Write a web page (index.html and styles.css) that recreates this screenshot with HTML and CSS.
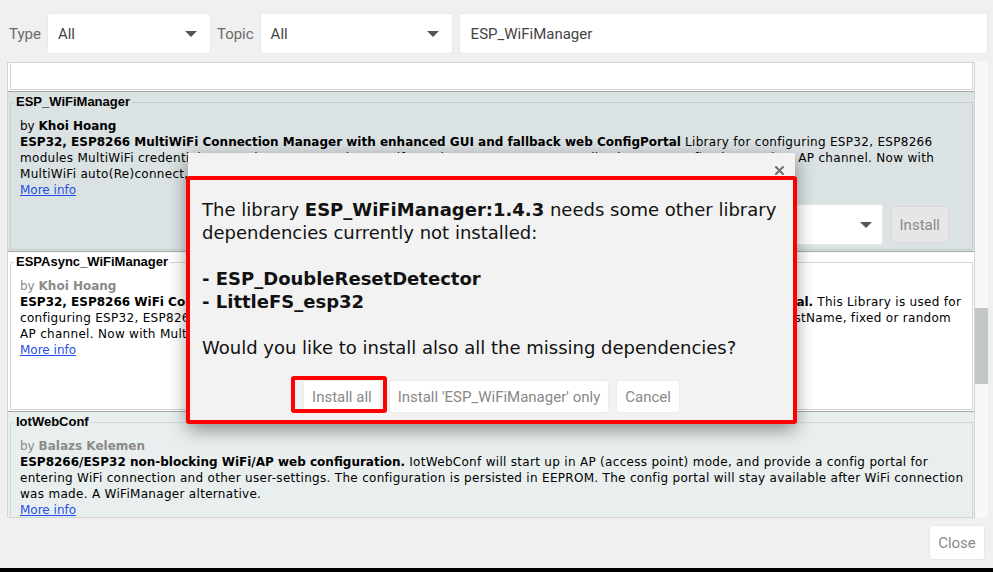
FILE: index.html
```html
<!DOCTYPE html>
<html>
<head>
<meta charset="utf-8">
<link rel="stylesheet" href="styles.css">
</head>
<body>
<div class="app">
  <div class="toolbar">
    <span class="lbl">Type</span>
    <div class="select sel-type"><span>All</span><i class="caret"></i></div>
    <span class="lbl">Topic</span>
    <div class="select sel-topic"><span>All</span><i class="caret"></i></div>
    <div class="search">ESP_WiFiManager</div>
  </div>

  <div class="listwrap">
    <div class="list">
      <div class="item stub"><div class="stubbox"></div></div>

      <div class="item selected">
        <fieldset>
          <legend>ESP_WiFiManager</legend>
          <div class="by">by <b>Khoi Hoang</b></div>
          <div class="desc"><b>ESP32, ESP8266 MultiWiFi Connection Manager with enhanced GUI and fallback web ConfigPortal</b> Library for configuring ESP32, ESP8266<br>modules MultiWiFi credentials at runtime. You can also specify static DNS servers, personalized HostName fixed or random AP channel. Now with<br>MultiWiFi auto(Re)connect, configurable Config Portal Title, custom DHCP hostname</div>
          <a class="more">More info</a>
          <div class="actions">
            <div class="vselect"><span>Select version</span><i class="caret"></i></div>
            <button class="install">Install</button>
          </div>
        </fieldset>
      </div>

      <div class="item">
        <fieldset>
          <legend>ESPAsync_WiFiManager</legend>
          <div class="by grey">by <b>Khoi Hoang</b></div>
          <div class="desc"><b>ESP32, ESP8266 WiFi Connection Manager using AsyncWebServer, with enhanced GUI and fallback web ConfigPortal.</b> This Library is used for<br>configuring ESP32, ESP8266 modules WiFi Credentials at runtime. You can also specify static DNS servers, personalized HostName, fixed or random<br>AP channel. Now with MultiWiFi auto(Re)connect, configurable Config Portal Title</div>
          <a class="more">More info</a>
        </fieldset>
      </div>

      <div class="item alt">
        <fieldset>
          <legend>IotWebConf</legend>
          <div class="by grey">by <b>Balazs Kelemen</b></div>
          <div class="desc"><b>ESP8266/ESP32 non-blocking WiFi/AP web configuration.</b> IotWebConf will start up in AP (access point) mode, and provide a config portal for<br>entering WiFi connection and other user-settings. The configuration is persisted in EEPROM. The config portal will stay available after WiFi connection<br>was made. A WiFiManager alternative.</div>
          <a class="more">More info</a>
        </fieldset>
      </div>
    </div>
    <div class="scrollbar"><div class="thumb"></div></div>
  </div>

  <div class="footer"><button class="close">Close</button></div>
  <div class="blackbar"></div>

  <div class="dialog">
    <div class="dlg-head">
      <svg class="xicon" width="9" height="9" viewBox="0 0 9 9"><path d="M1 1L8 8M8 1L1 8" stroke="#6e6e6e" stroke-width="2" stroke-linecap="round"/></svg>
    </div>
    <div class="dlg-body">
      <p>The library <b>ESP_WiFiManager:1.4.3</b> needs some other library<br>dependencies currently not installed:</p>
      <p><b>- ESP_DoubleResetDetector<br>- LittleFS_esp32</b></p>
      <p class="last">Would you like to install also all the missing dependencies?</p>
      <div class="dlg-btns">
        <button class="btn hl">Install all<span class="mark"></span></button>
        <button class="btn">Install 'ESP_WiFiManager' only</button>
        <button class="btn">Cancel</button>
      </div>
    </div>
  </div>
</div>
</body>
</html>
```

FILE: styles.css
```css
html, body {
  margin: 0;
  padding: 0;
}
body {
  width: 993px;
  height: 572px;
  overflow: hidden;
  background: #f0f0f0;
  font-family: Roboto, "Liberation Sans", sans-serif;
}
.app {
  position: relative;
  height: 572px;
  display: flex;
  flex-direction: column;
}

/* toolbar */
.toolbar {
  display: flex;
  align-items: center;
  gap: 6px;
  padding: 13px 5px 0 9px;
  height: 41px;
}
.lbl {
  font-size: 15px;
  color: #6a6a6a;
}
.select, .search, .vselect {
  box-sizing: border-box;
  height: 41px;
  background: #fff;
  border: 1px solid #e9e9e9;
  border-radius: 3px;
  display: flex;
  align-items: center;
  font-size: 15px;
  color: #444;
}
.select {
  justify-content: space-between;
  padding: 0 13px 0 10px;
}
.sel-type { width: 164px; }
.sel-topic { width: 193px; }
.search {
  flex: 1;
  padding-left: 11px;
}
.caret {
  display: block;
  width: 0;
  height: 0;
  border-left: 6px solid transparent;
  border-right: 6px solid transparent;
  border-top: 6px solid #555;
}

/* list */
.listwrap {
  display: flex;
  margin: 8px 5px 0 7px;
  height: 456px;
}
.list {
  flex: 1;
  border: 1px solid #d4d4d4;
  background: #fff;
  overflow: hidden;
}
.scrollbar {
  width: 13px;
  background: #f8f8f8;
}
.thumb {
  margin-top: 246px;
  height: 76px;
  background: #c1c6c6;
}
.item {
  box-sizing: border-box;
  height: 160px;
  padding-top: 2px;
  border-bottom: 1px solid #a6a6a6;
  display: flex;
  flex-direction: column;
  background: #fff;
}
.item.selected { background: #dbe2e3; }
.item.alt { background: #e9eeee; }
.item.stub {
  height: 29px;
  padding-top: 0;
}
.stubbox {
  flex: 1;
  margin: 0 1px 1px 2px;
  border: 1px solid #d6d6d6;
  border-top: none;
}
fieldset {
  flex: 1;
  min-width: 0;
  margin: 0 1px 1px 2px;
  padding: 0 9px;
  border: 1px solid #d6d6d6;
  font-family: "DejaVu Sans", sans-serif;
  font-size: 12px;
  line-height: 16px;
  color: #000;
}
.selected fieldset { border-color: #c5cdce; }
.alt fieldset { border-color: #d3d9d9; }
legend {
  font-family: "Liberation Sans", Arial, sans-serif;
  font-weight: bold;
  font-size: 13px;
  line-height: 16px;
  padding: 0 2px;
  margin-left: -6px;
  color: #000;
}
.by { margin-top: 8px; }
.by.grey { color: #8a8a8a; }
.desc {
  white-space: nowrap;
  overflow: hidden;
  letter-spacing: 0.3px;
}
.desc b { letter-spacing: 0; }
.more {
  display: block;
  color: #1f4ee6;
  text-decoration: underline;
  width: max-content;
}
.actions {
  display: flex;
  justify-content: flex-end;
  align-items: center;
  gap: 8px;
  margin-top: 6px;
  margin-right: 14px;
}
.vselect {
  width: 190px;
  justify-content: space-between;
  padding: 0 10px 0 10px;
  color: #c8c8c8;
  font-family: Roboto, sans-serif;
}
.install {
  height: 37px;
  padding: 0 8px;
  background: #e6e6e6;
  border: 1px solid #d9d9d9;
  border-radius: 3px;
  font-family: Roboto, sans-serif;
  font-size: 15px;
  color: #8a8a8a;
}

/* footer */
.footer {
  display: flex;
  justify-content: flex-end;
  padding: 7px 8px 0;
}
.close {
  height: 35px;
  width: 56px;
  padding: 0;
  background: #fff;
  border: 1px solid #e8e8e8;
  border-radius: 3px;
  font-family: Roboto, sans-serif;
  font-size: 15px;
  color: #8a8a8a;
}
.blackbar {
  margin-top: auto;
  height: 4px;
  background: #000;
}

/* dialog */
.dialog {
  position: absolute;
  left: 188px;
  top: 153px;
  width: 607px;
  background: #f2f2f2;
  box-shadow: 0 6px 18px rgba(0, 0, 0, 0.45);
}
.dlg-head {
  height: 23px;
  display: flex;
  justify-content: flex-end;
  align-items: flex-start;
}
.xicon {
  margin: 13px 11px 0 0;
}
.dlg-body {
  margin: 0 -2px -1px;
  border: 4px solid #ff0000;
  border-radius: 3px;
  padding: 18px 12px 7px 12px;
  font-family: "DejaVu Sans", sans-serif;
  font-size: 18px;
  line-height: 23px;
  color: #111;
}
.dlg-body p {
  margin: 0 0 23px;
}
.dlg-body p.last { margin: 0; }
.dlg-btns {
  display: flex;
  justify-content: center;
  gap: 7px;
  margin-top: 21px;
}
.btn {
  position: relative;
  height: 33px;
  padding: 0 8px;
  background: #fff;
  border: 1px solid #ececec;
  border-radius: 3px;
  font-family: Roboto, sans-serif;
  font-size: 15px;
  color: #888;
}
.btn.hl { margin-right: 1px; }
.mark {
  position: absolute;
  top: -5px;
  right: -7px;
  bottom: -1px;
  left: -13px;
  border: 4px solid #ff0000;
  border-radius: 3px;
}
```
